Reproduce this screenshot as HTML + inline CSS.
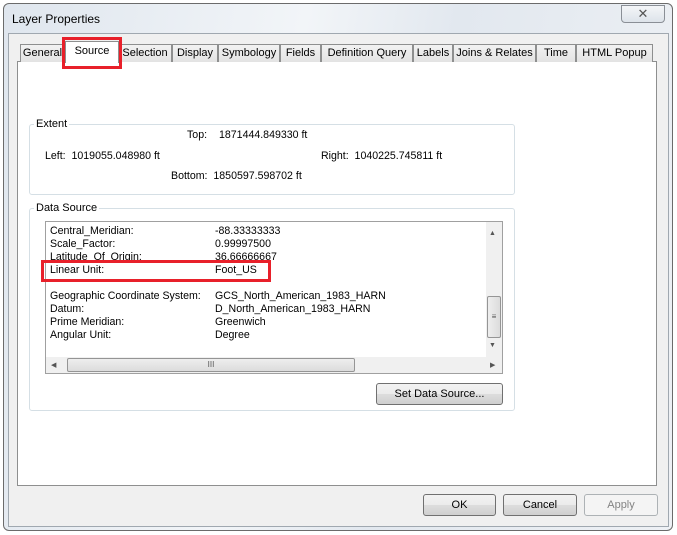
<!DOCTYPE html>
<html><head><style>
body{margin:0;width:677px;height:535px;overflow:hidden;background:#fff;font-family:"Liberation Sans",sans-serif;font-size:11px;color:#000;position:relative}
.a{position:absolute}
.tab{position:absolute;top:44px;height:18px;border:1px solid #8e8f8f;border-bottom:none;background:linear-gradient(#f2f2f2,#e3e3e3);box-sizing:border-box;text-align:center;line-height:17px;font-size:11px}
.grp{position:absolute;border:1px solid #d5dfe5;border-radius:3px}
.lbl{position:absolute;background:#fff;padding:0 2px;font-size:11px}
.btn{position:absolute;border:1px solid #707070;border-radius:3px;background:linear-gradient(#f2f2f2 0,#ebebeb 50%,#dddddd 51%,#cfcfcf);box-sizing:border-box;text-align:center;font-size:11px}
.t{position:absolute;font-size:10.6px;white-space:nowrap}
</style></head><body>
<div class="a" style="left:3px;top:3px;width:670px;height:528px;border:1px solid #6b6b6b;border-radius:6px;background:linear-gradient(100deg,#dfe6ee,#f2f5f8 40%,#e2e8ef 60%,#eef1f5);box-sizing:border-box"></div>
<div class="t" style="left:12px;top:12px;font-size:12px">Layer Properties</div>
<div class="a" style="left:621px;top:5px;width:44px;height:18px;border:1px solid #8a8f96;border-radius:0 0 4px 4px;background:linear-gradient(#f4f6f8,#dde3ea);box-sizing:border-box;text-align:center;color:#555;font-size:13px;line-height:16px">✕</div>
<div class="a" style="left:8px;top:33px;width:661px;height:494px;background:#f0f0f0;border:1px solid #a0a8b0;box-sizing:border-box"></div>
<div class="a" style="left:17px;top:61px;width:640px;height:425px;background:#fff;border:1px solid #8e8f8f;box-sizing:border-box"></div>
<div class="tab" style="left:20px;width:45px">General</div>
<div class="tab" style="left:118px;width:54px">Selection</div>
<div class="tab" style="left:172px;width:46px">Display</div>
<div class="tab" style="left:218px;width:62px">Symbology</div>
<div class="tab" style="left:280px;width:41px">Fields</div>
<div class="tab" style="left:321px;width:92px">Definition Query</div>
<div class="tab" style="left:413px;width:40px">Labels</div>
<div class="tab" style="left:453px;width:83px">Joins &amp; Relates</div>
<div class="tab" style="left:536px;width:40px">Time</div>
<div class="tab" style="left:576px;width:77px">HTML Popup</div>
<div class="tab" style="left:65px;top:41px;width:54px;height:22px;background:#fff;line-height:19px">Source</div>
<div class="a" style="left:62px;top:37px;width:60px;height:32px;border:3px solid #e8202a;box-sizing:border-box"></div>

<div class="grp" style="left:29px;top:124px;width:484px;height:69px"></div>
<div class="lbl" style="left:34px;top:118px">Extent</div>
<div class="t" style="left:187px;top:129px">Top:</div><div class="t" style="left:219px;top:129px">1871444.849330 ft</div>
<div class="t" style="left:45px;top:150px">Left:&nbsp; 1019055.048980 ft</div>
<div class="t" style="left:321px;top:150px">Right:&nbsp; 1040225.745811 ft</div>
<div class="t" style="left:171px;top:170px">Bottom:&nbsp; 1850597.598702 ft</div>

<div class="grp" style="left:29px;top:208px;width:484px;height:201px"></div>
<div class="lbl" style="left:34px;top:202px">Data Source</div>
<div class="a" style="left:45px;top:221px;width:458px;height:153px;border:1px solid #a0a0a0;box-sizing:border-box;overflow:hidden">
<div class="t" style="left:4px;top:3px">Central_Meridian:</div><div class="t" style="left:169px;top:3px">-88.33333333</div>
<div class="t" style="left:4px;top:16px">Scale_Factor:</div><div class="t" style="left:169px;top:16px">0.99997500</div>
<div class="t" style="left:4px;top:29px">Latitude_Of_Origin:</div><div class="t" style="left:169px;top:29px">36.66666667</div>
<div class="t" style="left:4px;top:42px">Linear Unit:</div><div class="t" style="left:169px;top:42px">Foot_US</div>
<div class="t" style="left:4px;top:68px">Geographic Coordinate System:</div><div class="t" style="left:169px;top:68px">GCS_North_American_1983_HARN</div>
<div class="t" style="left:4px;top:81px">Datum:</div><div class="t" style="left:169px;top:81px">D_North_American_1983_HARN</div>
<div class="t" style="left:4px;top:94px">Prime Meridian:</div><div class="t" style="left:169px;top:94px">Greenwich</div>
<div class="t" style="left:4px;top:107px">Angular Unit:</div><div class="t" style="left:169px;top:107px">Degree</div>
<div class="a" style="left:440px;top:0;width:16px;height:135px;background:#f0f0f0"></div>
<div class="a" style="left:443px;top:8px;font-size:7px;color:#555">▲</div>
<div class="a" style="left:443px;top:120px;font-size:7px;color:#555">▼</div>
<div class="a" style="left:441px;top:74px;width:14px;height:42px;border:1px solid #959595;border-radius:2px;background:linear-gradient(90deg,#eee,#dcdcdc);box-sizing:border-box;text-align:center;font-size:8px;line-height:40px;color:#555">≡</div>
<div class="a" style="left:0;top:135px;width:456px;height:16px;background:#f0f0f0"></div>
<div class="a" style="left:5px;top:139px;font-size:7px;color:#555">◀</div>
<div class="a" style="left:444px;top:139px;font-size:7px;color:#555">▶</div>
<div class="a" style="left:21px;top:136px;width:288px;height:14px;border:1px solid #959595;border-radius:2px;background:linear-gradient(#eee,#dcdcdc);box-sizing:border-box;text-align:center;font-size:8px;line-height:12px;color:#555">III</div>
</div>
<div class="a" style="left:41px;top:260px;width:230px;height:22px;border:3px solid #e8202a;box-sizing:border-box"></div>
<div class="btn" style="left:376px;top:383px;width:127px;height:22px;line-height:20px">Set Data Source...</div>

<div class="btn" style="left:423px;top:494px;width:73px;height:22px;line-height:20px">OK</div>
<div class="btn" style="left:503px;top:494px;width:74px;height:22px;line-height:20px">Cancel</div>
<div class="btn" style="left:584px;top:494px;width:74px;height:22px;line-height:20px;background:#f4f4f4;border-color:#adb2b5;color:#838383">Apply</div>
</body></html>
